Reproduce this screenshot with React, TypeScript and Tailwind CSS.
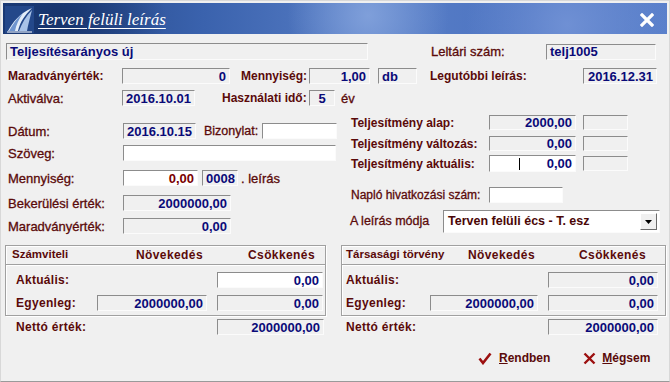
import React from "react";

type FieldProps = {
  w: string;
  h?: string;
  white?: boolean;
  children?: React.ReactNode;
  cls?: string;
};

function Field({ w, h = "h-[16px]", white = false, children, cls = "justify-end text-[#0a0a78]" }: FieldProps) {
  return (
    <div
      className={`${w} ${h} ${white ? "bg-white" : "bg-[#f0f0f0]"} ${cls} box-border flex shrink-0 items-center border border-t-[#8c8c8c] border-l-[#8c8c8c] border-r-[#fbfbfb] border-b-[#fbfbfb] px-[3px] text-[13px] font-bold leading-none whitespace-nowrap`}
    >
      {children}
    </div>
  );
}

function Lbl({ w, children, cls = "text-[13px] [-webkit-text-stroke:0.3px_#5a0a0a]" }: { w?: string; children: React.ReactNode; cls?: string }) {
  return <div className={`${w ?? ""} ${cls} shrink-0 whitespace-nowrap leading-none text-[#5a0a0a]`}>{children}</div>;
}

function Logo() {
  return (
    <svg width="29" height="27" viewBox="0 0 29 27">
      <rect x="0" y="0" width="29" height="27" fill="#24488a" />
      <path d="M3 25 C8 16 14 8 27 2 C20 9 15 16 13 25 Z" fill="#e3edf9" />
      <path d="M4 25 C8 18 12 12 18 7 C14 13 11 19 10 25 Z" fill="#6f95cf" />
      <path d="M14 25 C17 17 21 10 27 4 C25 12 23 19 22 25 Z" fill="#a9c3e8" />
      <path d="M2 26 L27 26" stroke="#ffffff" strokeWidth="1" />
    </svg>
  );
}

function GroupBox({ w, title, titleW, nov, aktWhite, egyL, egyR, aktVal }: {
  w: string; title: string; titleW: string; nov: string; aktWhite: boolean; egyL: string; egyR: string; aktVal: string;
}) {
  return (
    <div className={`${w} box-border border border-[#a0a0a0] shadow-[inset_1px_1px_0_#ffffff,1px_1px_0_#ffffff]`}>
      <div className="flex h-[18px] items-center">
        <div className={`${titleW} shrink-0 text-[11.5px] font-bold text-[#5a0a0a] leading-none whitespace-nowrap`}>{title}</div>
        <div className={`${nov} shrink-0 text-[12px] font-bold tracking-[0.4px] text-[#5a0a0a] leading-none`}>Növekedés</div>
        <div className="shrink-0 text-[12px] font-bold tracking-[0.4px] text-[#5a0a0a] leading-none">Csökkenés</div>
      </div>
      <div className="h-[2px] border-t border-[#a0a0a0] bg-white" />
      <div className="mt-[6px] flex h-[16px] items-center">
        <Lbl w={egyL} cls="text-[12px] font-bold tracking-[0.3px]">Aktuális:</Lbl>
        <div className={egyR} />
        <div className="w-[10px] shrink-0" />
        <Field w={aktVal} white={aktWhite}>0,00</Field>
      </div>
      <div className="mt-[7px] mb-[4px] flex h-[16px] items-center">
        <Lbl w={egyL} cls="text-[12px] font-bold tracking-[0.3px]">Egyenleg:</Lbl>
        <Field w={egyR}>2000000,00</Field>
        <div className="w-[10px] shrink-0" />
        <Field w={aktVal}>0,00</Field>
      </div>
    </div>
  );
}

export default function App() {
  return (
    <div className="box-border h-[382px] w-[670px] overflow-hidden border border-[#d8d8d8] border-b-[#9a9a9a] bg-[#f0f0f0] font-['Liberation_Sans',Arial,sans-serif]">
      {/* title bar */}
      <div className="mx-[2px] mt-[2px] flex h-[31px] items-center bg-[radial-gradient(circle_at_8%_60%,#16336b_0,transparent_18%),radial-gradient(circle_at_55%_40%,#7f9fda_0,transparent_22%),radial-gradient(circle_at_85%_70%,#6f90d4_0,transparent_18%),linear-gradient(90deg,#1e3f7d_0%,#3a62ad_30%,#587ec6_55%,#4d74c2_80%,#5a80cb_100%)]">
        <div className="ml-[2px] mt-[2px]">
          <Logo />
        </div>
        <div className="ml-[4px] mt-[2px] font-['Liberation_Serif',serif] text-[17px] italic leading-none text-white underline decoration-1 underline-offset-[3px]">
          Terven felüli leírás
        </div>
        <div className="ml-auto mr-[13px] mt-[2px]">
          <svg width="14" height="14" viewBox="0 0 14 14">
            <path d="M2 2 L12 12 M12 2 L2 12" stroke="#ffffff" strokeWidth="3.2" strokeLinecap="square" />
          </svg>
        </div>
      </div>

      {/* top rows */}
      <div className="mt-[9px] flex h-[17px] items-center">
        <Field w="w-[362px] ml-[5px]" h="h-[17px]" cls="justify-start text-[#0a0a78]">Teljesítésarányos új</Field>
        <Lbl w="w-[115px] ml-[63px]">Leltári szám:</Lbl>
        <Field w="w-[110px]" cls="justify-start text-[#0a0a78]">telj1005</Field>
      </div>
      <div className="mt-[8px] flex h-[16px] items-center">
        <Lbl w="w-[114px] ml-[7px]" cls="text-[12px] font-bold">Maradványérték:</Lbl>
        <Field w="w-[108px]">0</Field>
        <Lbl w="w-[68px] ml-[11px]" cls="text-[12px] font-bold">Mennyiség:</Lbl>
        <Field w="w-[61px]">1,00</Field>
        <Field w="w-[39px] ml-[8px]" cls="justify-start text-[#0a0a78]">db</Field>
        <Lbl w="w-[153px] ml-[13px]" cls="text-[12px] font-bold">Legutóbbi leírás:</Lbl>
        <Field w="w-[74px]">2016.12.31</Field>
      </div>
      <div className="mt-[6px] flex h-[16px] items-center">
        <Lbl w="w-[114px] ml-[7px]">Aktiválva:</Lbl>
        <Field w="w-[73px]" cls="justify-start text-[#0a0a78]">2016.10.01</Field>
        <Lbl w="w-[87px] ml-[27px]" cls="text-[12px] font-bold">Használati idő:</Lbl>
        <Field w="w-[26px]" cls="justify-center text-[#0a0a78]">5</Field>
        <Lbl w="ml-[6px]">év</Lbl>
      </div>

      {/* middle section */}
      <div className="flex">
        <div className="ml-[7px] w-[335px] shrink-0 pt-[17px]">
          <div className="flex h-[16px] items-center">
            <Lbl w="w-[115px]">Dátum:</Lbl>
            <Field w="w-[73px]" cls="justify-start text-[#0a0a78]">2016.10.15</Field>
            <Lbl w="w-[58px] ml-[8px]" cls="text-[12.5px] [-webkit-text-stroke:0.3px_#5a0a0a]">Bizonylat:</Lbl>
            <Field w="w-[75px]" white />
          </div>
          <div className="mt-[6px] flex h-[16px] items-center">
            <Lbl w="w-[115px]">Szöveg:</Lbl>
            <Field w="w-[213px]" white />
          </div>
          <div className="mt-[9px] flex h-[16px] items-center">
            <Lbl w="w-[115px]">Mennyiség:</Lbl>
            <Field w="w-[75px]" white cls="justify-end text-[#7a0000]">0,00</Field>
            <Field w="w-[36px] ml-[4px]" cls="justify-start text-[#0a0a78]">0008</Field>
            <Lbl w="ml-[3px]">. leírás</Lbl>
          </div>
          <div className="mt-[9px] flex h-[16px] items-center">
            <Lbl w="w-[115px]">Bekerülési érték:</Lbl>
            <Field w="w-[108px]">2000000,00</Field>
          </div>
          <div className="mt-[7px] flex h-[16px] items-center">
            <Lbl w="w-[115px]">Maradványérték:</Lbl>
            <Field w="w-[108px]">0,00</Field>
          </div>
        </div>

        <div className="ml-[8px] w-[312px] shrink-0 pt-[9px]">
          <div className="flex h-[15px] items-center">
            <Lbl w="w-[138px]" cls="text-[12px] font-bold">Teljesítmény alap:</Lbl>
            <Field w="w-[87px]" h="h-[15px]">2000,00</Field>
            <Field w="w-[45px] ml-[7px]" h="h-[15px]" />
          </div>
          <div className="mt-[6px] flex h-[15px] items-center">
            <Lbl w="w-[138px]" cls="text-[12px] font-bold">Teljesítmény változás:</Lbl>
            <Field w="w-[87px]" h="h-[15px]">0,00</Field>
            <Field w="w-[45px] ml-[7px]" h="h-[15px]" />
          </div>
          <div className="mt-[4px] flex h-[17px] items-center">
            <Lbl w="w-[138px]" cls="text-[12px] font-bold">Teljesítmény aktuális:</Lbl>
            <Field w="w-[87px]" h="h-[17px]" white cls="justify-between text-[#0a0a78]">
              <span className="ml-[26px] h-[12px] w-px bg-black" />
              <span>0,00</span>
            </Field>
            <Field w="w-[45px] ml-[7px]" h="h-[15px]" />
          </div>
          <div className="mt-[15px] flex h-[16px] items-center">
            <Lbl w="w-[138px]" cls="text-[12px] [-webkit-text-stroke:0.3px_#5a0a0a]">Napló hivatkozási szám:</Lbl>
            <Field w="w-[74px]" white />
          </div>
          <div className="mt-[7px] flex h-[23px] items-center">
            <Lbl w="w-[93px] -ml-[1px]" cls="text-[12.5px] [-webkit-text-stroke:0.3px_#5a0a0a]">A leírás módja</Lbl>
            <div className="box-border flex h-[23px] w-[217px] shrink-0 items-center border border-t-[#8c8c8c] border-l-[#8c8c8c] border-r-[#fbfbfb] border-b-[#fbfbfb] bg-white pl-[4px] pr-[2px]">
              <span className="text-[12.5px] font-bold leading-none whitespace-nowrap text-[#4a0606]">Terven felüli écs - T. esz</span>
              <div className="ml-auto box-border flex h-[17px] w-[17px] items-center justify-center border border-t-white border-l-white border-r-[#6a6a6a] border-b-[#6a6a6a] bg-[#f0f0f0]">
                <svg width="7" height="4" viewBox="0 0 7 4">
                  <path d="M0 0 L7 0 L3.5 4 Z" fill="#000" />
                </svg>
              </div>
            </div>
          </div>
        </div>
      </div>

      {/* bottom groups */}
      <div className="mt-[11px] flex">
        <div className="ml-[4px] w-[321px] shrink-0">
          <GroupBox
            w="w-[321px]"
            title="Számviteli"
            titleW="w-[130px] pl-[6px]"
            nov="w-[112px]"
            aktWhite
            egyL="w-[91px] pl-[10px]"
            egyR="w-[110px]"
            aktVal="w-[106px]"
          />
          <div className="mt-[3px] flex h-[16px] items-center">
            <Lbl w="w-[212px] pl-[11px]" cls="text-[12px] font-bold tracking-[0.3px]">Nettó érték:</Lbl>
            <Field w="w-[107px]">2000000,00</Field>
          </div>
        </div>
        <div className="ml-[15px] w-[325px] shrink-0">
          <GroupBox
            w="w-[325px]"
            title="Társasági törvény"
            titleW="w-[126px] pl-[4px]"
            nov="w-[111px]"
            aktWhite={false}
            egyL="w-[88px] pl-[4px]"
            egyR="w-[108px]"
            aktVal="w-[110px]"
          />
          <div className="mt-[3px] flex h-[16px] items-center">
            <Lbl w="w-[207px] pl-[5px]" cls="text-[12px] font-bold tracking-[0.3px]">Nettó érték:</Lbl>
            <Field w="w-[110px]">2000000,00</Field>
          </div>
          <div className="mt-[14px] flex h-[18px] items-center">
            <svg className="ml-[137px]" width="14" height="13" viewBox="0 0 14 13">
              <path d="M1.5 6.5 L5 11 L12.5 1.5" stroke="#9c1010" strokeWidth="2.6" fill="none" strokeLinejoin="miter" />
            </svg>
            <span className="ml-[7px] text-[12px] font-bold leading-none text-[#5a0a0a]">
              <span className="underline">R</span>endben
            </span>
            <svg className="ml-[33px]" width="13" height="13" viewBox="0 0 13 13">
              <path d="M1.5 1.5 L11.5 11.5 M11.5 1.5 L1.5 11.5" stroke="#9c1010" strokeWidth="2.4" />
            </svg>
            <span className="ml-[6px] text-[12px] font-bold leading-none text-[#5a0a0a]">
              <span className="underline">M</span>égsem
            </span>
          </div>
        </div>
      </div>
    </div>
  );
}
